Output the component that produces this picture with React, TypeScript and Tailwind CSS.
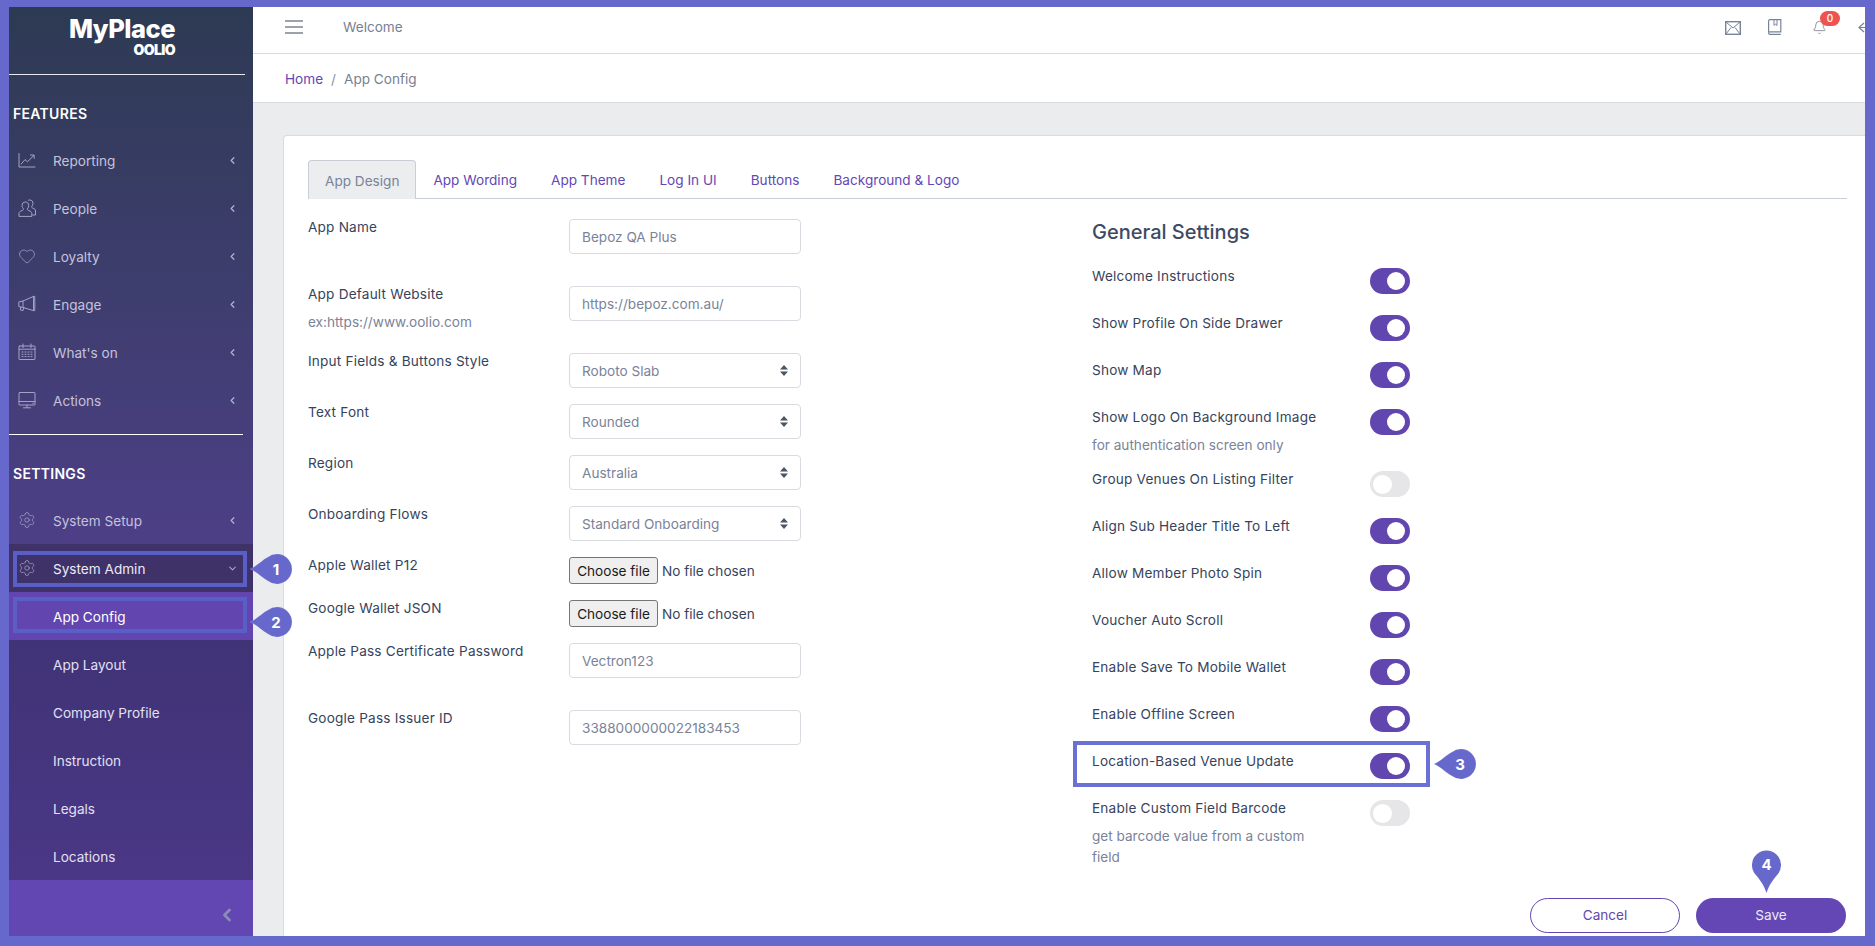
import React from "react";
import { ChevronLeft, ChevronDown, Heart, Settings, Bell } from "lucide-react";

const Svg = ({ children, w = 18, h = 18 }: { children: React.ReactNode; w?: number; h?: number }) => (
  <svg width={w} height={h} viewBox="0 0 18 18" fill="none" stroke="currentColor" strokeWidth="1" strokeLinecap="round" strokeLinejoin="round">
    {children}
  </svg>
);

const ChartIcon = () => (
  <Svg>
    <path d="M1 2.5v13.5h16" />
    <path d="M3.2 13 7 8.6l2.6 2.2 6-6.2" />
    <path d="M12.5 4h3.6v3.4" />
  </Svg>
);
const PeopleIcon = () => (
  <Svg>
    <path d="M1 17v-2.4c0-1.6 1.2-2.4 3-3 1.2-.4 1.6-1 1.6-1.6-.9-.8-1.5-2-1.5-3.6C4.100 4.400 5.300 3 7.400 3s3.300 1.400 3.300 3.400c0 1.600-.6 2.800-1.500 3.600 0 .6.400 1.200 1.600 1.600 1.800.6 3 1.400 3 3V17z" />
    <path d="M10.500 1.200C11 1 11.400 1 11.800 1c2 0 3.200 1.400 3.200 3.300 0 1.500-.6 2.700-1.400 3.400 0 .6.300 1.100 1.400 1.500 1.500.5 2.500 1.300 2.500 2.800V16h-2.800" />
  </Svg>
);
const MegaIcon = () => (
  <Svg>
    <path d="M1.200 6.800 5 6l10.500-4.600v14.200L5 12.500l-3.800-.8z" />
    <path d="M5 6v6.500" />
    <path d="M2.800 12 2.400 15l2.600.6.900-3" />
    <path d="M15.500 1.400h1.300v14.200h-1.300" />
  </Svg>
);
const CalIcon = () => (
  <Svg>
    <rect x="1" y="3" width="16" height="13.500" rx="0.5" />
    <path d="M1 6.200h16M5 1v3.600M13 1v3.600" />
    <path d="M4 9h1M7 9h1M10 9h1M13 9h1M4 11.300h1M7 11.300h1M10 11.300h1M13 11.300h1M4 13.600h1M7 13.600h1M10 13.600h1M13 13.600h1" />
  </Svg>
);
const DeskIcon = () => (
  <Svg>
    <rect x="1" y="1.500" width="16" height="12.500" rx="0.5" />
    <path d="M1 10.500h16M9 14v2.500M5.500 16.800h7" />
    <path d="M14.800 12.300h.6" />
  </Svg>
);

const Callout = ({ n, className }: { n: string; className: string }) => (
  <div className={`absolute flex h-[30px] w-[43px] items-center justify-end pr-[2px] ${className}`}>
    <svg className="absolute inset-0" width="43" height="30" viewBox="0 0 43 30">
      <path d="M0 15C7 12 12 6 18 3A15 15 0 1 1 18 27C12 24 7 18 0 15Z" fill="#6669cb" stroke="#ffffff" strokeOpacity="0.25" strokeWidth="0.6" />
    </svg>
    <span className="relative w-[30px] text-center text-[15px] leading-none font-bold text-white">{n}</span>
  </div>
);

const Item = ({ label, icon }: { label: string; icon: React.ReactNode }) => (
  <div className="flex h-[48px] items-center text-[13.6px] text-[#c4c2dc]">
    <span className="flex w-[44px] justify-center pr-[8px] text-[#a5a3c4]">{icon}</span>
    <span className="pt-[2px]">{label}</span>
    <ChevronLeft size={11} strokeWidth={2.6} className="mr-[15px] ml-auto text-[#b5b3d0]" />
  </div>
);

const SubItem = ({ label }: { label: string }) => (
  <div className="flex h-[48px] items-center pt-[2px] pl-[44px] text-[13.6px] text-[#e2e0f2]">{label}</div>
);

const Field = ({ label, hint, value, h }: { label: string; hint?: string; value: string; h: string }) => (
  <div className={`flex ${h}`}>
    <div className="w-[261px] text-[#36435c]">
      <div className="leading-[17px] tracking-[0.2px]">{label}</div>
      {hint && <div className="mt-[11px] leading-[17px] text-[#7a8398]">{hint}</div>}
    </div>
    <input
      readOnly
      value={value}
      className="h-[35px] w-[232px] rounded-[4px] border border-[#d8dbe0] bg-white px-[12px] text-[13.6px] text-[#7a8398] outline-none"
    />
  </div>
);

const Select = ({ label, value }: { label: string; value: string }) => (
  <div className="flex h-[51px]">
    <div className="w-[261px] leading-[17px] tracking-[0.2px] text-[#36435c]">{label}</div>
    <div className="relative h-[35px] w-[232px]">
      <select
        defaultValue={value}
        className="h-full w-full appearance-none rounded-[4px] border border-[#d8dbe0] bg-white px-[12px] pt-[1px] text-[13.6px] text-[#7a8398] outline-none"
      >
        <option>{value}</option>
      </select>
      <svg className="pointer-events-none absolute top-[12px] right-[13px]" width="8" height="11" viewBox="0 0 8 11" fill="#4b5563">
        <path d="M4 0 8 4.400H0zM4 11 0 6.600h8z" />
      </svg>
    </div>
  </div>
);

const FileRow = ({ label }: { label: string }) => (
  <div className="flex h-[43px]">
    <div className="w-[261px] leading-[17px] tracking-[0.2px] text-[#36435c]">{label}</div>
    <div className="flex h-[27px] items-center text-[13.6px]">
      <button className="h-[27px] w-[89px] rounded-[3px] border border-[#767676] bg-[#efefef] pt-[1px] text-[13.6px] text-[#1a1a1a]">Choose file</button>
      <span className="ml-[4px] pt-[2px] text-[#36435c]">No file chosen</span>
    </div>
  </div>
);

const Toggle = ({ on }: { on: boolean }) => (
  <div className={`flex h-[26px] w-[40px] shrink-0 items-center rounded-full ${on ? "justify-end bg-[#6246b0] pr-[5px]" : "bg-[#e6e6e8] pl-[3px]"}`}>
    <div className={`rounded-full bg-white ${on ? "h-[18px] w-[18px]" : "h-[19px] w-[19px]"}`} />
  </div>
);

const Setting = ({ label, hint, on = true, h = "h-[47px]" }: { label: string; hint?: string; on?: boolean; h?: string }) => (
  <div className={`flex ${h}`}>
    <div className="w-[278px] pr-[38px] text-[#36435c]">
      <div className="leading-[17px] tracking-[0.2px]">{label}</div>
      {hint && <div className="mt-[9px] leading-[21px] text-[#7a8398]">{hint}</div>}
    </div>
    <Toggle on={on} />
  </div>
);

export default function App() {
  return (
    <div className="relative h-[946px] w-[1875px] overflow-hidden bg-[#6669cb] pt-[7px] pr-[10px] pb-[10px] pl-[9px] font-[family-name:Inter,sans-serif] text-[13.6px]">
      <div className="flex h-full w-full overflow-hidden bg-[#ebecee]">
        {/* Sidebar */}
        <aside className="flex w-[244px] shrink-0 flex-col">
          <div className="h-[537px] bg-gradient-to-b from-[#2d3a53] to-[#4d3f87]">
            <div className="mr-[8px] flex h-[68px] flex-col items-center border-b border-[#e8e8f0] pt-[7px] pr-[10px]">
              <div className="flex w-fit flex-col items-end">
                <div className="text-[25.5px] leading-[30px] font-extrabold tracking-[-0.5px] text-white">MyPlace</div>
                <div className="-mt-[1px] text-[14px] leading-[14px] font-black tracking-[-0.6px] text-white">OOLIO</div>
              </div>
            </div>
            <div className="flex h-[61px] items-center pt-[16px] pl-[4px] text-[14px] font-semibold tracking-[0.3px] text-white">FEATURES</div>
            <Item label="Reporting" icon={<ChartIcon />} />
            <Item label="People" icon={<PeopleIcon />} />
            <Item label="Loyalty" icon={<Heart size={18} strokeWidth={1} />} />
            <Item label="Engage" icon={<MegaIcon />} />
            <Item label="What's on" icon={<CalIcon />} />
            <Item label="Actions" icon={<DeskIcon />} />
            <div className="mt-[10px] mr-[10px] border-t border-[#ffffff]" />
            <div className="flex h-[61px] items-center pt-[16px] pl-[4px] text-[14px] font-semibold tracking-[0.3px] text-white">SETTINGS</div>
            <Item label="System Setup" icon={<Settings size={18} strokeWidth={1} />} />
          </div>
          <div className="flex h-[48px] items-center bg-[#3e3268] text-[13.6px] text-[#eceaf8]">
            <span className="flex w-[44px] justify-center pr-[8px] text-[#a5a3c4]">
              <Settings size={18} strokeWidth={1} />
            </span>
            <span className="pt-[2px]">System Admin</span>
            <ChevronDown size={11} strokeWidth={2.4} className="mr-[15px] ml-auto text-[#a9a7c6]" />
          </div>
          <div className="flex h-[48px] items-center bg-[#6245ae] pt-[2px] pl-[44px] text-[13.6px] text-white">App Config</div>
          <div className="bg-gradient-to-b from-[#403376] to-[#4a3786]">
            <SubItem label="App Layout" />
            <SubItem label="Company Profile" />
            <SubItem label="Instruction" />
            <SubItem label="Legals" />
            <SubItem label="Locations" />
          </div>
          <div className="flex flex-1 items-center justify-end bg-[#6246b2] pt-[14px] pr-[16px]">
            <ChevronLeft size={20} strokeWidth={3.4} className="text-[#8a8cb4]" />
          </div>
        </aside>

        {/* Main */}
        <main className="flex min-w-0 flex-1 flex-col overflow-hidden">
          <header className="flex h-[47px] shrink-0 items-center border-b border-[#d8dbe0] bg-white pb-[6px] pl-[32px] text-[#768192]">
            <svg width="18" height="14" viewBox="0 0 18 14" stroke="#7d8290" strokeWidth="1.4">
              <path d="M0 1h18M0 7h18M0 13h18" />
            </svg>
            <span className="ml-[40px]">Welcome</span>
            <div className="ml-auto -mr-[8px] flex items-center text-[#7f8aa0]">
              <svg width="16" height="14" viewBox="0 0 16 14" fill="none" stroke="#77839a" strokeWidth="1.4" className="mt-[1px]">
                <rect x="0.7" y="0.7" width="14.600" height="12.600" />
                <path d="M1 1l7 6 7-6M1 13l5-6.500M15 13l-5-6.500" strokeWidth="1" />
              </svg>
              <svg width="15" height="16" viewBox="0 0 15 16" fill="none" stroke="#77839a" strokeWidth="1.2" className="ml-[26px]">
                <path d="M1.600 13V2.200C1.600 1.200 2.200.6 3 .6h10.800v12.200H3c-.9 0-1.400.5-1.400 1.100s.5 1.400 1.400 1.400h10.800" />
                <path d="M7 .8v5.600l1.500-1.200L10 6.400V.8" strokeWidth="1" />
              </svg>
              <div className="relative ml-[30px]">
                <Bell size={15} strokeWidth={1.2} className="text-[#6f7482]" />
                <span className="absolute -top-[9px] left-[8px] flex h-[15px] w-[20px] items-center justify-center rounded-full bg-[#ef5350] text-[10px] leading-none font-medium text-white">0</span>
              </div>
              <svg width="16" height="15" viewBox="0 0 16 15" fill="none" stroke="#77839a" strokeWidth="1.2" className="ml-[30px]">
                <path d="M7 3 2 7.500 7 12M2 7.500h11" />
              </svg>
            </div>
          </header>
          <div className="flex h-[49px] shrink-0 items-center border-b border-[#d8dbe0] bg-white pt-[2px] pl-[32px]">
            <span className="text-[#6247b5]">Home</span>
            <span className="mx-[8px] text-[#8a93a2]">/</span>
            <span className="text-[#768192]">App Config</span>
          </div>

          <section className="mt-[32px] ml-[30px] flex-1 rounded-tl-[4px] border-t border-l border-[#d8dbe0] bg-white pt-[24px] pr-[18px] pl-[24px]">
            <nav className="flex h-[39px] border-b border-[#c9cdd8]">
              <div className="flex h-[39px] items-center rounded-t-[4px] border border-[#c9cdd8] border-b-0 bg-[#ebedef] px-[16px] pt-[2px] text-[#7a8398]">App Design</div>
              {["App Wording", "App Theme", "Log In UI", "Buttons", "Background & Logo"].map((t) => (
                <div key={t} className="flex h-[38px] items-center border border-transparent px-[16px] pt-[2px] text-[13.6px] text-[#6247b5]">{t}</div>
              ))}
            </nav>

            <div className="mt-[20px] flex">
              <div className="w-[784px] shrink-0">
                <Field label="App Name" value="Bepoz QA Plus" h="h-[67px]" />
                <Field label="App Default Website" hint="ex:https://www.oolio.com" value="https://bepoz.com.au/" h="h-[67px]" />
                <Select label="Input Fields & Buttons Style" value="Roboto Slab" />
                <Select label="Text Font" value="Rounded" />
                <Select label="Region" value="Australia" />
                <Select label="Onboarding Flows" value="Standard Onboarding" />
                <FileRow label="Apple Wallet P12" />
                <FileRow label="Google Wallet JSON" />
                <Field label="Apple Pass Certificate Password" value="Vectron123" h="h-[67px]" />
                <Field label="Google Pass Issuer ID" value="3388000000022183453" h="h-[51px]" />
              </div>
              <div className="flex-1">
                <h2 className="h-[49px] pt-[1px] text-[20px] leading-[24px] font-medium text-[#3d4a64]">General Settings</h2>
                <Setting label="Welcome Instructions" />
                <Setting label="Show Profile On Side Drawer" />
                <Setting label="Show Map" />
                <Setting label="Show Logo On Background Image" hint="for authentication screen only" h="h-[62px]" />
                <Setting label="Group Venues On Listing Filter" on={false} />
                <Setting label="Align Sub Header Title To Left" />
                <Setting label="Allow Member Photo Spin" />
                <Setting label="Voucher Auto Scroll" />
                <Setting label="Enable Save To Mobile Wallet" />
                <Setting label="Enable Offline Screen" />
                <Setting label="Location-Based Venue Update" />
                <Setting label="Enable Custom Field Barcode" hint="get barcode value from a custom field" h="h-[66px]" on={false} />
              </div>
            </div>

            <div className="mt-[32px] mr-[1px] flex justify-end gap-[16px]">
              <button className="h-[35px] w-[150px] rounded-full border border-[#6246b0] bg-white text-[#6246b0]">Cancel</button>
              <button className="h-[35px] w-[150px] rounded-full bg-[#6446b4] text-[#ece9f8]">Save</button>
            </div>
          </section>
        </main>
      </div>

      {/* Tutorial annotations */}
      <div className="pointer-events-none absolute top-[551px] left-[13px] h-[36px] w-[234px] border-[4px] border-[#5a5fc8]" />
      <div className="pointer-events-none absolute top-[597px] left-[13px] h-[36px] w-[234px] border-[4px] border-[#5a5fc8]" />
      <div className="pointer-events-none absolute top-[741px] left-[1073px] h-[46px] w-[357px] border-[4px] border-[#6b70d4]" />
      <Callout n="1" className="top-[554px] left-[250px]" />
      <Callout n="2" className="top-[607px] left-[250px]" />
      <Callout n="3" className="top-[749px] left-[1434px]" />
      <div className="absolute top-[850px] left-[1752px] flex h-[43px] w-[29px] justify-center pt-[6px]">
        <svg className="absolute inset-0" width="29" height="43" viewBox="0 0 29 43">
          <path d="M14.500 43C12 35 8 30 3.500 24.500A14.500 14.500 0 1 1 25.500 24.500C21 30 17 35 14.500 43Z" fill="#6669cb" />
        </svg>
        <span className="relative text-[15px] leading-[18px] font-bold text-white">4</span>
      </div>
    </div>
  );
}
